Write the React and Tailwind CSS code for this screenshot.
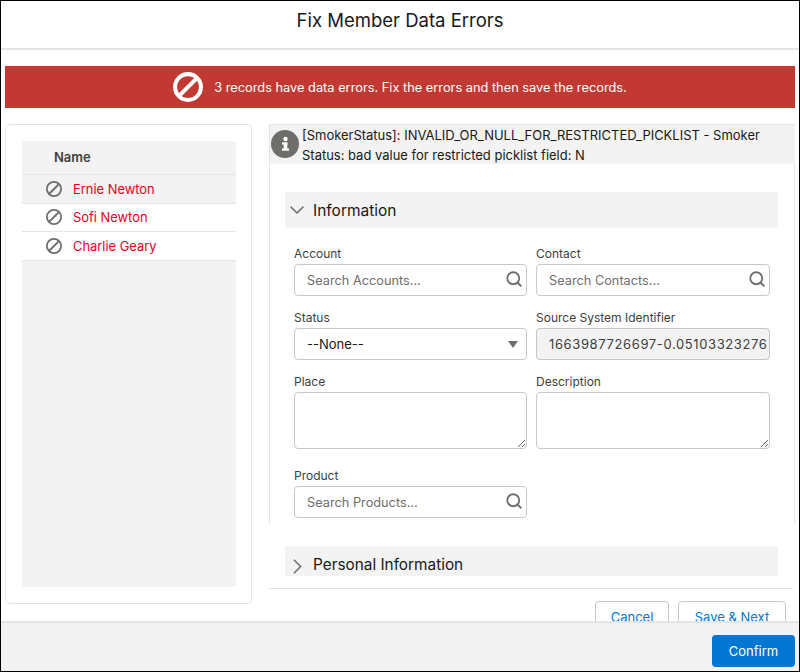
import React from "react";
import { ChevronDown, ChevronRight, Search } from "lucide-react";

function Ban({ size, color, sw }) {
  return (
    <svg width={size} height={size} viewBox="0 0 32 32" fill="none" className="shrink-0">
      <circle cx="16" cy="16" r={16 - sw / 2} stroke={color} strokeWidth={sw} />
      <line x1="6.5" y1="25.5" x2="25.5" y2="6.5" stroke={color} strokeWidth={sw} />
    </svg>
  );
}

function Label({ children }) {
  return <div className="h-[16px] text-[12px] leading-[16px] text-[#3e3e3c] mb-[2px]">{children}</div>;
}

function SearchField({ label, placeholder }) {
  return (
    <div>
      <Label>{label}</Label>
      <div className="relative">
        <input
          placeholder={placeholder}
          className="w-full h-[32px] border border-[#c9c7c5] rounded-[4px] bg-white pl-[12px] pr-[30px] text-[12.75px] outline-none placeholder:text-[#706e6b]"
        />
        <Search size={18} strokeWidth={2.4} className="absolute right-[4px] top-[6px] text-[#706e6b]" />
      </div>
    </div>
  );
}

function Person({ name, active }) {
  return (
    <div className={`flex items-center h-[28.5px] border-b border-[#e5e5e5] ${active ? "bg-[#f3f3f3]" : "bg-white"} pl-[24px]`}>
      <Ban size={16} color="#706e6b" sw={3.6} />
      <span className="ml-[11px] pt-[1px] text-[12.9px] text-[#ea001e]">{name}</span>
    </div>
  );
}

export default function App() {
  return (
    <div
      className="w-[800px] h-[672px] border border-black bg-white flex flex-col overflow-hidden text-[#181818]"
      style={{ fontFamily: '"Inter", "Liberation Sans", sans-serif' }}
    >
      <header className="h-[49px] shrink-0 border-b-2 border-[#e5e5e5] flex items-center justify-center pb-[9px]">
        <h1 className="text-[18.5px] font-normal leading-none">Fix Member Data Errors</h1>
      </header>

      <main className="flex-1 min-h-0 overflow-hidden pl-[4px] pr-[4px] pt-[16px]">
        <div className="h-[42px] bg-[#c23934] text-white flex items-center justify-center gap-[11px] text-[12.8px]">
          <Ban size={30} color="#ffffff" sw={4.4} />
          <span className="pt-[1px]">3 records have data errors. Fix the errors and then save the records.</span>
        </div>

        <div className="flex mt-[16px] gap-[17px]">
          <aside className="w-[247px] h-[480px] shrink-0 border border-[#e5e5e5] rounded-[4px] pt-[16px] pb-[16px] pl-[16px] pr-[15px]">
            <div className="h-full bg-[#f3f3f3] flex flex-col">
              <div className="h-[34px] flex items-center pl-[32px] text-[13px] font-semibold text-[#3e3e3c] border-b border-[#e5e5e5]">
                Name
              </div>
              <Person name="Ernie Newton" active />
              <Person name="Sofi Newton" />
              <Person name="Charlie Geary" />
            </div>
          </aside>

          <section className="w-[526px] shrink-0 flex flex-col">
            <div className="h-[40px] bg-[#f3f3f3] border-l border-t border-[#e5e5e5] flex items-start pl-[1px]">
              <svg width="28" height="28" viewBox="0 0 28 28" className="shrink-0 mt-[5px]">
                <circle cx="14" cy="14" r="14" fill="#706e6b" />
                <circle cx="14.5" cy="9" r="2.2" fill="#fff" />
                <rect x="11" y="12.5" width="5.5" height="2" fill="#fff" />
                <rect x="12.7" y="12.5" width="3.6" height="7" fill="#fff" />
                <rect x="11" y="18.5" width="7" height="2.2" fill="#fff" />
              </svg>
              <p className="ml-[3px] w-[480px] text-[12.97px] leading-[19.5px] pt-[1px] whitespace-nowrap">
                [SmokerStatus]: INVALID_OR_NULL_FOR_RESTRICTED_PICKLIST - Smoker
                <br />
                Status: bad value for restricted picklist field: N
              </p>
            </div>

            <div className="h-[360px] border-l border-r border-[#e5e5e5] pt-[28px] pl-[15px] pr-[14px]">
              <div className="h-[36px] w-[493px] bg-[#f3f3f3] flex items-center">
                <ChevronDown size={24} strokeWidth={1.6} className="text-[#706e6b]" />
                <span className="ml-[4px] pt-[1px] text-[15.5px] text-[#181818]">Information</span>
              </div>

              <div className="grid grid-cols-[233px_234px] gap-x-[9px] pl-[9px] mt-[18px]">
                <SearchField label="Account" placeholder="Search Accounts..." />
                <SearchField label="Contact" placeholder="Search Contacts..." />

                <div className="mt-[14px]">
                  <Label>Status</Label>
                  <div className="relative">
                    <select className="w-full h-[32px] appearance-none border border-[#c9c7c5] rounded-[4px] bg-white pl-[12px] pt-[1px] text-[13px] outline-none text-[#181818]">
                      <option>--None--</option>
                    </select>
                    <div className="absolute right-[9px] top-[13px] w-0 h-0 border-l-[5.5px] border-r-[5.5px] border-t-[7px] border-l-transparent border-r-transparent border-t-[#706e6b]" />
                  </div>
                </div>
                <div className="mt-[14px]">
                  <Label>Source System Identifier</Label>
                  <input
                    disabled
                    value="1663987726697-0.05103323276891"
                    readOnly
                    className="w-full h-[32px] border border-[#c9c7c5] rounded-[4px] bg-[#f3f3f3] pl-[12px] pr-[1px] text-[13px] tracking-[0.62px] text-[#3e3e3c] outline-none"
                  />
                </div>

                <div className="mt-[14px]">
                  <Label>Place</Label>
                  <textarea className="block w-full h-[57px] border border-[#c9c7c5] rounded-[4px] bg-white outline-none" />
                </div>
                <div className="mt-[14px]">
                  <Label>Description</Label>
                  <textarea className="block w-full h-[57px] border border-[#c9c7c5] rounded-[4px] bg-white outline-none" />
                </div>

                <div className="mt-[19px]">
                  <SearchField label="Product" placeholder="Search Products..." />
                </div>
              </div>
            </div>

            <div className="h-[65px] shrink-0 border-b border-[#e5e5e5] w-[524px] pt-[22px] pl-[16px]">
              <div className="h-[30px] w-[493px] bg-[#f3f3f3] flex items-center pt-[7px] overflow-hidden">
                <ChevronRight size={25} strokeWidth={1.6} className="text-[#706e6b] mt-[3px]" />
                <span className="ml-[3px] text-[15.35px] text-[#181818]">Personal Information</span>
              </div>
            </div>

            <div className="flex justify-end gap-[9px] pt-[12px] pr-[9px] w-[526px]">
              <button className="w-[74px] h-[32px] bg-white border border-[#c9c7c5] rounded-[4px] text-[13px] text-[#0176d3] pt-[1px]">Cancel</button>
              <button className="w-[108px] h-[32px] bg-white border border-[#c9c7c5] rounded-[4px] text-[13px] text-[#0176d3] pt-[1px]">Save &amp; Next</button>
            </div>
          </section>
        </div>
      </main>

      <footer className="h-[50px] shrink-0 bg-[#f3f3f3] border-t-2 border-[#e5e5e5] flex items-start justify-end pt-[12px] pr-[4px]">
        <button className="w-[83px] h-[32px] bg-[#0176d3] rounded-[4px] text-white text-[13px] pt-[1px]">Confirm</button>
      </footer>
    </div>
  );
}
